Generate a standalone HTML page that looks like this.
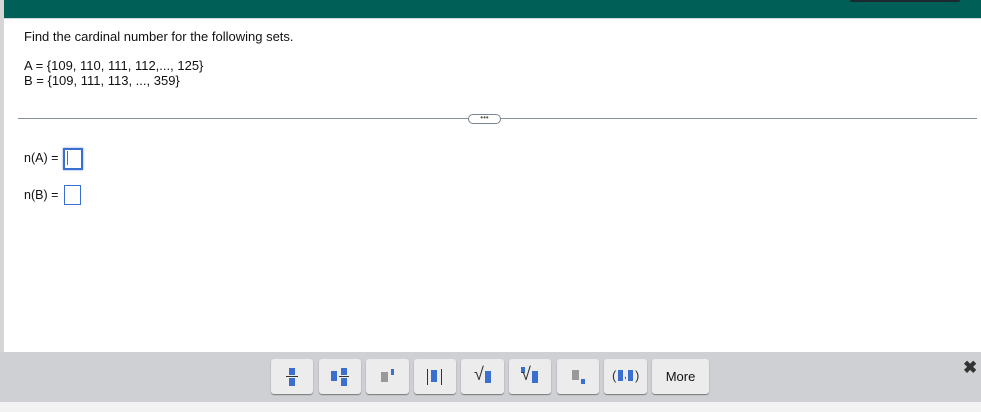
<!DOCTYPE html>
<html><head><style>
body{margin:0;width:981px;height:412px;position:relative;overflow:hidden;background:#fff;font-family:"Liberation Sans",sans-serif;font-size:12px;color:#111}
.a{position:absolute}
.btn{position:absolute;top:359px;height:35px;background:#ececec;border-radius:3px;box-shadow:0 1px 1px #777;}
.b{position:absolute;background:#3a6fd0}
.g{position:absolute;background:#999}
</style></head><body>
<div class="a" style="left:0;top:0;width:981px;height:18px;background:#005f56"></div>
<div class="a" style="left:0;top:18px;width:981px;height:1px;background:#cfd8dc"></div>
<div class="a" style="left:0;top:0;width:4px;height:412px;background:#d6d6d6"></div>
<div class="a" style="left:850px;top:0;width:110px;height:2px;background:#1a2a30;border-radius:0 0 3px 3px"></div>
<div class="a" style="left:24px;top:29px;font-size:13px">Find the cardinal number for the following sets.</div>
<div class="a" style="left:24px;top:58px;font-size:13px">A = {109, 110, 111, 112,..., 125}</div>
<div class="a" style="left:24px;top:73px;font-size:13px">B = {109, 111, 113, ..., 359}</div>
<div class="a" style="left:18px;top:118px;width:959px;height:1px;background:#8a9099"></div>
<div class="a" style="left:468px;top:114px;width:31px;height:8px;background:#fff;border:1px solid #7a8390;border-radius:5px;font-size:8px;line-height:6px;text-align:center;color:#555">•••</div>
<div class="a" style="left:24px;top:151px;font-size:12.5px">n(A) =</div>
<div class="a" style="left:63px;top:148px;width:16px;height:18px;border:2px solid #3a6fd0;box-shadow:0 0 2px #7aa0e8"></div>
<div class="a" style="left:67px;top:151px;width:1px;height:14px;background:#3a6fd0"></div>
<div class="a" style="left:24px;top:188px;font-size:12.5px">n(B) =</div>
<div class="a" style="left:64px;top:185px;width:15px;height:18px;border:1px solid #3a6fd0"></div>
<div class="a" style="left:0;top:352px;width:981px;height:50px;background:#cfd0d4"></div>
<div class="a" style="left:0;top:402px;width:981px;height:10px;background:#f2f2f2"></div>
<div class="btn" style="left:271px;width:42px"><div class="b" style="left:18px;top:9px;width:6px;height:7px"></div><div class="a" style="left:15px;top:17px;width:12px;height:1px;background:#333"></div><div class="b" style="left:18px;top:19px;width:6px;height:8px"></div></div>
<div class="btn" style="left:319px;width:42px"><div class="b" style="left:12px;top:12px;width:6px;height:10px"></div><div class="b" style="left:22px;top:9px;width:6px;height:7px"></div><div class="a" style="left:20px;top:17px;width:10px;height:1px;background:#333"></div><div class="b" style="left:22px;top:19px;width:6px;height:8px"></div></div>
<div class="btn" style="left:366px;width:43px"><div class="g" style="left:15px;top:13px;width:7px;height:10px"></div><div class="b" style="left:25px;top:10px;width:3px;height:6px"></div></div>
<div class="btn" style="left:414px;width:42px"><div class="a" style="left:13px;top:10px;width:1px;height:16px;background:#333"></div><div class="b" style="left:17px;top:11px;width:6px;height:12px"></div><div class="a" style="left:27px;top:10px;width:1px;height:16px;background:#333"></div></div>
<div class="btn" style="left:461px;width:43px"><div class="a" style="left:13px;top:5px;font-size:18px;color:#333">√</div><div class="b" style="left:24px;top:12px;width:6px;height:12px"></div></div>
<div class="btn" style="left:509px;width:42px"><div class="b" style="left:12px;top:8px;width:4px;height:6px"></div><div class="a" style="left:12px;top:5px;font-size:18px;color:#333">√</div><div class="b" style="left:23px;top:12px;width:6px;height:12px"></div></div>
<div class="btn" style="left:557px;width:42px"><div class="g" style="left:15px;top:11px;width:7px;height:10px"></div><div class="b" style="left:24px;top:20px;width:4px;height:5px"></div></div>
<div class="btn" style="left:604px;width:43px"><div class="a" style="left:8px;top:9px;font-size:13px;color:#333">(</div><div class="b" style="left:14px;top:11px;width:5px;height:11px"></div><div class="a" style="left:20px;top:11px;font-size:10px;color:#333">,</div><div class="b" style="left:24px;top:11px;width:5px;height:11px"></div><div class="a" style="left:31px;top:9px;font-size:13px;color:#333">)</div></div>
<div class="btn" style="left:652px;width:57px;font-size:13px;line-height:35px;text-align:center;color:#111">More</div>
<div class="a" style="left:963px;top:358px;font-size:17px;font-weight:bold;color:#333">✖</div>
</body></html>
